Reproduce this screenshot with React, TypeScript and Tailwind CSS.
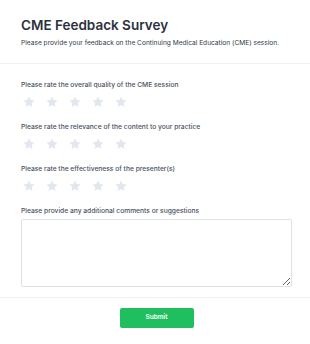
import React from "react";

function Star() {
  return (
    <svg width="14" height="14" viewBox="0 0 24 24" className="block">
      <path
        d="M12 2.5l2.9 6.1 6.6.8-4.9 4.6 1.3 6.6L12 17.3l-5.9 3.3 1.3-6.6-4.9-4.6 6.6-.8z"
        fill="#e2e6ef"
      />
    </svg>
  );
}

function Rating({ label }: { label: string }) {
  return (
    <div className="flex flex-col">
      <div className="text-[6.7px] leading-[10px] font-medium text-[#4a5160]">{label}</div>
      <div className="mt-[5px] flex gap-[9px] pl-[1px]">
        {[0, 1, 2, 3, 4].map((i) => (
          <Star key={i} />
        ))}
      </div>
    </div>
  );
}

export default function App() {
  return (
    <div
      className="w-[310px] h-[344px] bg-white flex flex-col"
      style={{ fontFamily: "Inter, 'Noto Sans', sans-serif" }}
    >
      <div className="px-[21px] pt-[15px] pb-[15px] border-b border-[#eef0f3]">
        <div className="text-[13.5px] leading-[20px] font-semibold text-[#2b3240]">CME Feedback Survey</div>
        <div className="mt-[3px] text-[6.6px] leading-[10px] text-[#2f3a4c] whitespace-nowrap">
          Please provide your feedback on the Continuing Medical Education (CME) session.
        </div>
      </div>
      <div className="px-[21px] pt-[16px] flex flex-col gap-[13px]">
        <Rating label="Please rate the overall quality of the CME session" />
        <Rating label="Please rate the relevance of the content to your practice" />
        <Rating label="Please rate the effectiveness of the presenter(s)" />
        <div className="flex flex-col">
          <div className="text-[6.7px] leading-[10px] font-medium text-[#4a5160]">
            Please provide any additional comments or suggestions
          </div>
          <textarea className="mt-[3px] w-[271px] h-[68px] border border-[#dfe2e8] rounded-[2px] resize-y text-[7px] p-1 outline-none" />
        </div>
      </div>
      <div className="mt-[10px] border-t border-[#f1f3f6] flex justify-center pt-[10px] pl-[3px]">
        <button className="w-[74px] h-[20px] rounded-[2px] bg-[#1fbf5f] text-white text-[6.5px] font-semibold">
          Submit
        </button>
      </div>
    </div>
  );
}
